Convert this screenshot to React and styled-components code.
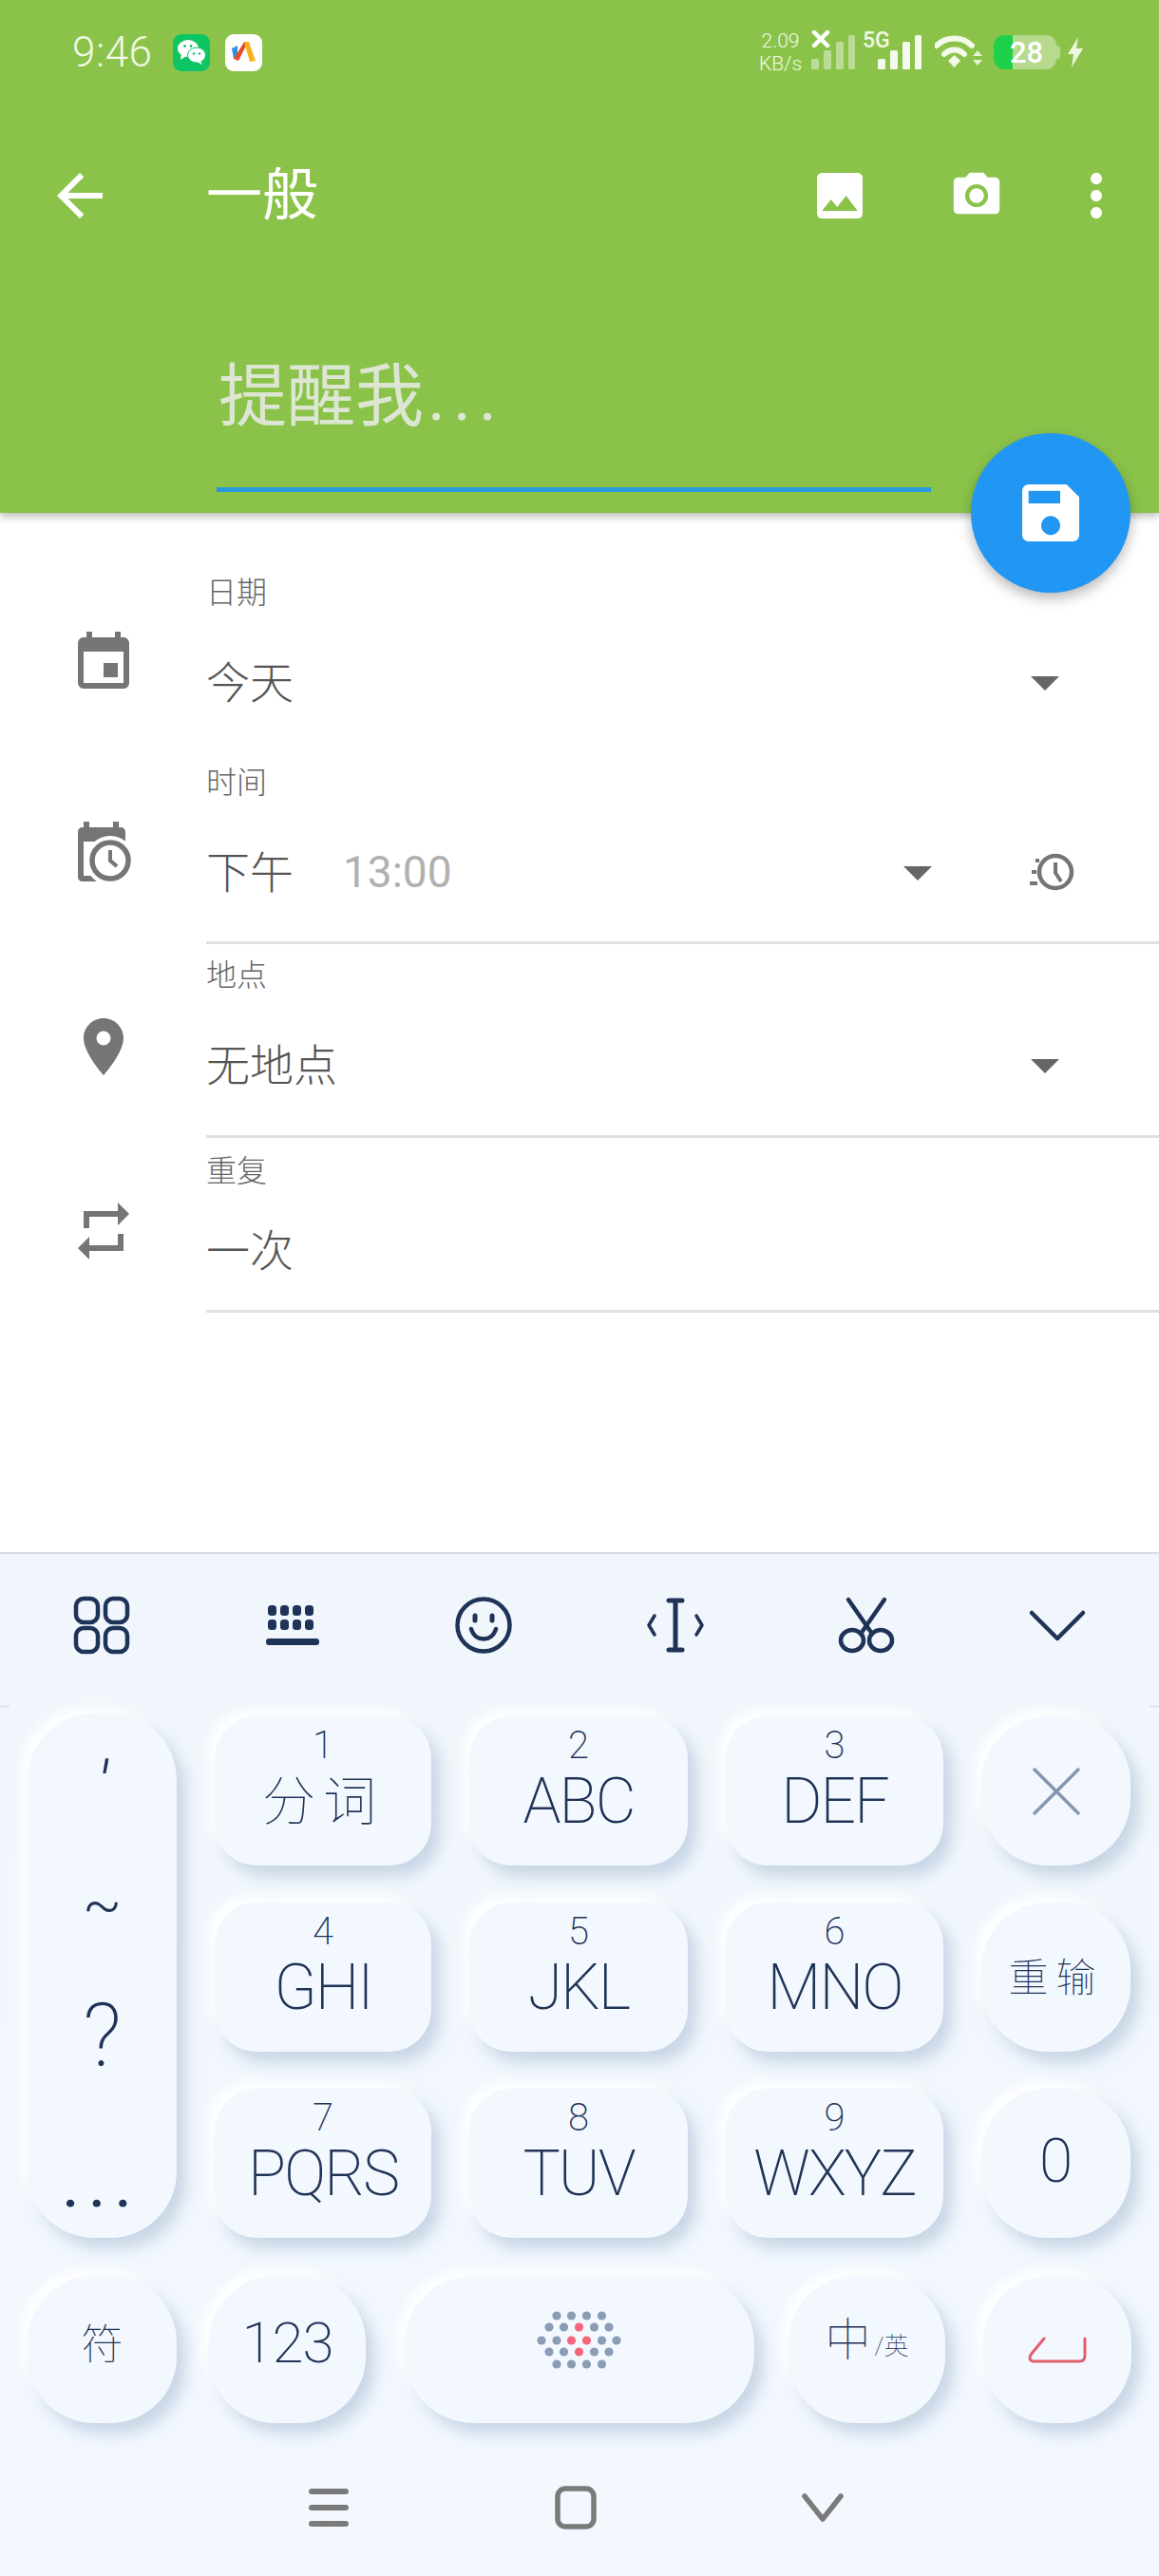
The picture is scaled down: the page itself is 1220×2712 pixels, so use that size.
import React from "react";
import styled, { createGlobalStyle } from "styled-components";
import {
  MdArrowBack,
  MdArrowDropDown,
  MdEvent,
  MdImage,
  MdMoreVert,
  MdPhotoCamera,
  MdPlace,
  MdRepeat,
  MdSave,
} from "react-icons/md";

const ink = "#1f3357";
const sans = `Roboto, "Noto Sans CJK SC", sans-serif`;

const Global = createGlobalStyle`
  html, body { margin: 0; padding: 0; background: #fff; }
  * { box-sizing: border-box; }
`;

const Screen = styled.div`
  width: 1220px;
  height: 2712px;
  display: flex;
  flex-direction: column;
  overflow: hidden;
  font-family: ${sans};
  background: #fff;
`;

/* header */
const Header = styled.header`
  position: relative;
  z-index: 2;
  height: 540px;
  flex: none;
  background: #8bc34a;
  box-shadow: 0 3px 9px rgba(0, 0, 0, 0.3);
`;
const StatusBar = styled.div`
  height: 110px;
  display: flex;
  align-items: center;
  padding-left: 76px;
  color: #f1f8e6;
`;
const Clock = styled.span`
  width: 87px;
  font-size: 44px;
  font-weight: 300;
  letter-spacing: 0.5px;
  white-space: nowrap;
`;
const AppIcon = styled.span`
  width: 39px;
  height: 39px;
  margin-left: ${(p) => p.$ml}px;
  border-radius: 9px;
  background: ${(p) => p.$bg};
  display: flex;
  align-items: center;
  justify-content: center;
`;
const StatusRight = styled.div`
  margin-left: auto;
  margin-right: 79px;
  display: flex;
  align-items: center;
  height: 40px;
`;
const NetSpeed = styled.div`
  width: 53px;
  font-size: 21px;
  line-height: 24px;
  font-weight: 300;
  text-align: center;
  white-space: nowrap;
`;
const SignalBox = styled.div`
  position: relative;
  margin-left: ${(p) => p.$ml}px;
  display: flex;
`;
const FiveG = styled.span`
  position: absolute;
  left: -16px;
  top: -6px;
  font-size: 23px;
  line-height: 23px;
  font-weight: 500;
`;
const Battery = styled.div`
  position: relative;
  width: 66px;
  height: 36px;
  margin-left: 12px;
  border-radius: 11px;
  background: linear-gradient(to right, #1fd14a 0 20px, rgba(255, 255, 255, 0.38) 20px);
  color: #fff;
  font-size: 31px;
  font-weight: 500;
  display: flex;
  align-items: center;
  justify-content: center;
  padding-left: 3px;
  &::after {
    content: "";
    position: absolute;
    right: -4px;
    top: 11px;
    width: 4px;
    height: 14px;
    border-radius: 0 3px 3px 0;
    background: rgba(255, 255, 255, 0.38);
  }
`;
const ToolBar = styled.div`
  height: 192px;
  display: flex;
  align-items: center;
  color: #fff;
`;
const BarButton = styled.div`
  width: ${(p) => p.$w}px;
  flex: none;
  display: flex;
  justify-content: center;
  font-size: ${(p) => p.$size || 64}px;
  margin-right: ${(p) => p.$mr || 0}px;
`;
const Title = styled.div`
  margin-left: 49px;
  flex: 1;
  font-size: 59px;
  line-height: 70px;
  font-weight: 400;
`;
const InputWrap = styled.div`
  width: 752px;
  margin-left: 228px;
  padding: 66px 0 45px 2px;
  border-bottom: 5px solid #2a98dc;
`;
const Placeholder = styled.div`
  font-size: 72px;
  line-height: 100px;
  font-weight: 400;
  color: #dde6d3;
  white-space: nowrap;
  span {
    letter-spacing: 8px;
    margin-left: 4px;
  }
`;
const Fab = styled.div`
  position: absolute;
  right: 30px;
  bottom: -84px;
  width: 168px;
  height: 168px;
  border-radius: 50%;
  background: #2196f3;
  color: #fff;
  font-size: 80px;
  display: flex;
  align-items: center;
  justify-content: center;
  box-shadow: 0 6px 14px rgba(0, 0, 0, 0.28);
`;

/* form */
const Form = styled.main`
  flex: 1;
  padding-top: 64px;
`;
const Field = styled.div`
  display: flex;
  padding-top: ${(p) => p.$top || 0}px;
`;
const IconSlot = styled.div`
  width: 217px;
  flex: none;
  display: flex;
  justify-content: center;
  align-items: flex-start;
  padding-top: ${(p) => p.$top}px;
  color: #757575;
  font-size: 72px;
`;
const FieldBody = styled.div`
  flex: 1;
`;
const FieldLabel = styled.div`
  height: 40px;
  font-size: 32px;
  line-height: 40px;
  font-weight: 300;
  color: #666;
`;
const ValueRow = styled.div`
  height: ${(p) => p.$h}px;
  padding-right: 84px;
  display: flex;
  align-items: center;
  font-size: 46px;
  font-weight: 300;
  color: #555;
  border-bottom: ${(p) => (p.$line ? "3px solid #e0e0e0" : "none")};
`;
const ValueText = styled.span`
  position: relative;
  top: -3px;
`;
const TimeText = styled.span`
  margin-left: 52px;
  flex: 1;
  color: #b0b0b0;
  font-size: 46px;
  font-weight: 400;
`;
const Grow = styled.span`
  flex: 1;
`;
const Arrow = styled.span`
  display: flex;
  font-size: 72px;
  color: #666;
  margin-right: ${(p) => p.$mr || 0}px;
`;

/* keyboard */
const Keyboard = styled.section`
  position: relative;
  height: 1078px;
  flex: none;
  background: linear-gradient(to bottom, #f0f6fb, #f3f8ff);
  border-top: 2px solid #d9dee3;
  color: ${ink};
`;
const KbTools = styled.div`
  height: 150px;
  padding: 0 6px;
  display: grid;
  grid-template-columns: repeat(6, 1fr);
  align-items: center;
  justify-items: center;
  &::before,
  &::after {
    content: "";
    position: absolute;
    top: 159px;
    width: 10px;
    height: 3px;
    background: #e4e9ef;
  }
  &::before { left: 0; }
  &::after { right: 0; }
`;
const KeyGrid = styled.div`
  margin-top: 21px;
  padding-left: 29px;
  display: grid;
  grid-template-columns: 157px 228px 230px 229px 157px;
  grid-template-rows: repeat(3, 157px);
  gap: 39px 40px;
`;
const Key = styled.div`
  background: #f3f8fe;
  border-radius: ${(p) => p.$radius || 44}px;
  box-shadow: 9px 11px 16px rgba(165, 185, 210, 0.55), -7px -7px 12px #fff;
  display: flex;
  flex-direction: column;
  align-items: center;
  justify-content: center;
  font-weight: 100;
  white-space: nowrap;
  margin-left: ${(p) => p.$ml || 0}px;
  width: ${(p) => (p.$w ? p.$w + "px" : "auto")};
`;
const SymbolKey = styled(Key)`
  grid-row: 1 / span 3;
  margin-top: -3px;
  justify-content: flex-start;
  padding-top: 12px;
`;
const SymbolGlyph = styled.div`
  height: 100px;
  margin-bottom: 39px;
  padding-top: ${(p) => p.$pt || 0}px;
  font-size: ${(p) => p.$size}px;
  line-height: 100px;
  font-weight: ${(p) => p.$weight || 300};
  font-style: ${(p) => (p.$italic ? "italic" : "normal")};
  letter-spacing: ${(p) => p.$sp || 0}px;
`;
const NumKey = styled(Key)`
  justify-content: flex-start;
  padding-top: 9px;
`;
const Digit = styled.div`
  font-size: 40px;
  line-height: 44px;
  font-weight: 200;
`;
const Letters = styled.div`
  margin-top: 7px;
  font-size: ${(p) => p.$size || 66}px;
  line-height: 60px;
  font-weight: ${(p) => p.$weight || 200};
  letter-spacing: ${(p) => (p.$sp !== undefined ? p.$sp : -2)}px;
`;
const SideText = styled.div`
  font-size: ${(p) => p.$size}px;
  font-weight: ${(p) => p.$weight || 100};
  letter-spacing: ${(p) => p.$sp || 0}px;
  margin-bottom: ${(p) => p.$mb || 0}px;
`;
const LangText = styled.div`
  display: flex;
  align-items: flex-end;
  font-size: 48px;
  line-height: 60px;
  font-weight: 100;
  margin-bottom: 20px;
  span {
    font-size: 26px;
    line-height: 48px;
    margin-left: 4px;
  }
`;
const BottomRow = styled.div`
  height: 155px;
  margin-top: 40px;
  padding-left: 29px;
  display: flex;
  > * { height: 155px; flex: none; }
`;
const NavBar = styled.nav`
  height: 164px;
  padding: 14px 8px 0 0;
  display: flex;
  justify-content: center;
  align-items: center;
  color: #777;
`;
const NavSlot = styled.div`
  width: 260px;
  display: flex;
  justify-content: center;
`;

const ToolSvg = ({ children }) => (
  <svg width="64" height="64" viewBox="0 0 64 64" fill="none" stroke={ink} strokeWidth="4.5" strokeLinecap="round" strokeLinejoin="round">
    {children}
  </svg>
);

const WeChat = () => (
  <svg width="31" height="28" viewBox="0 0 31 28">
    <ellipse cx="12" cy="10" rx="11" ry="9" fill="#fff" />
    <path d="M5 16l-1 6 6-4z" fill="#fff" />
    <ellipse cx="21" cy="17" rx="9.5" ry="8" fill="#fff" stroke="#0ec564" strokeWidth="1" />
    <path d="M25 23l2 4-6-3z" fill="#fff" />
    <circle cx="8.5" cy="7.5" r="1.4" fill="#0ec564" />
    <circle cx="15" cy="7.5" r="1.4" fill="#0ec564" />
    <circle cx="18" cy="15.5" r="1.2" fill="#0ec564" />
    <circle cx="24" cy="15.5" r="1.2" fill="#0ec564" />
  </svg>
);

const ViaLogo = () => (
  <svg width="28" height="26" viewBox="0 0 28 26">
    <path d="M1 9l6-3v12l-4 2z" fill="#2f8fe0" />
    <path d="M3 20L14 2h4L8 22z" fill="#ea4b26" />
    <path d="M14 2h5l7 20-6 1z" fill="#f8b31c" />
  </svg>
);

const Bars = ({ dim }) => (
  <svg width="46" height="36" viewBox="0 0 46 36" fill="#fff" opacity={dim ? 0.42 : 0.92}>
    <rect x="0" y="25" width="8" height="11" rx="1.5" />
    <rect x="13" y="16" width="8" height="20" rx="1.5" />
    <rect x="26" y="7" width="8" height="29" rx="1.5" />
    <rect x="39" y="0" width="7" height="36" rx="1.5" />
  </svg>
);

const Cross = () => (
  <svg width="20" height="18" viewBox="0 0 20 18" style={{ position: "absolute", left: 0, top: -5 }}>
    <path d="M3 2l14 14M17 2L3 16" stroke="#fff" strokeWidth="4.5" strokeLinecap="round" />
  </svg>
);

const Wifi = () => (
  <svg width="50" height="36" viewBox="0 0 50 36" fill="none" stroke="#f4faea">
    <path d="M2 11C12 1 29 1 39 11" strokeWidth="6" strokeLinecap="round" />
    <path d="M10 20c6-6 15-6 21 0" strokeWidth="6" strokeLinecap="round" />
    <path d="M14 27l6.500-6 6.500 6-6.500 7z" fill="#f4faea" stroke="none" />
    <path d="M40 22l5-6 5 6zM40 26l5 6 5-6z" fill="#f4faea" stroke="none" opacity="0.85" />
  </svg>
);

const Bolt = () => (
  <svg width="18" height="32" viewBox="0 0 18 32" style={{ marginLeft: 11 }}>
    <path d="M12 0L1 18h6L5 32l12-20h-7z" fill="#eef6e2" />
  </svg>
);

const EventClock = () => (
  <svg width="72" height="72" viewBox="0 0 72 72" fill="#757575">
    <path d="M15 3h6v6h25V3h6v6h2c3 0 5 2 5 5v47c0 3-2 5-5 5H14c-3 0-5-2-5-5V14c0-3 2-5 5-5h1zM15 24v36h37V24z" />
    <circle cx="43" cy="44" r="26" fill="#fff" />
    <circle cx="43" cy="44" r="19" fill="#fff" stroke="#757575" strokeWidth="5.5" />
    <path d="M43 33v11l7 6" fill="none" stroke="#757575" strokeWidth="4" />
  </svg>
);

const FastClock = () => (
  <svg width="60" height="60" viewBox="0 0 60 60" fill="none" stroke="#757575">
    <circle cx="35" cy="30" r="17" strokeWidth="4.5" />
    <path d="M35 20v11l6 9" strokeWidth="4" />
    <path d="M14 18h4M10 30h5M8 42h8" strokeWidth="4" />
  </svg>
);

const voiceRows = [
  { y: 12, x: [28, 43.500, 59.500, 75.500], red: [] },
  { y: 24, x: [20, 35.500, 51.500, 67.500, 83], red: [2] },
  { y: 38, x: [12, 28, 43.500, 59.500, 75.500, 91], red: [2, 3] },
  { y: 50, x: [20, 35.500, 51.500, 67.500, 83], red: [2] },
  { y: 63, x: [28, 43.500, 59.500, 75.500], red: [] },
];

const VoiceDots = () => (
  <svg width="104" height="76" viewBox="0 0 104 76" style={{ marginBottom: 20 }}>
    {voiceRows.map((row) =>
      row.x.map((x, i) => (
        <circle key={row.y + "-" + x} cx={x} cy={row.y} r="4.600" fill={row.red.includes(i) ? "#f4667a" : "#8a9db5"} />
      ))
    )}
  </svg>
);

const numKeys = [
  ["1", "分词", 56, 8, 100],
  ["2", "ABC"],
  ["3", "DEF"],
  ["4", "GHI"],
  ["5", "JKL"],
  ["6", "MNO"],
  ["7", "PQRS"],
  ["8", "TUV"],
  ["9", "WXYZ"],
];

export default function App() {
  return (
    <Screen>
      <Global />
      <Header>
        <StatusBar>
          <Clock>9:46</Clock>
          <AppIcon $ml={19} $bg="#0ec564"><WeChat /></AppIcon>
          <AppIcon $ml={16} $bg="#fff"><ViaLogo /></AppIcon>
          <StatusRight>
            <NetSpeed>2.09<br />KB/s</NetSpeed>
            <SignalBox $ml={6}><Bars dim /><Cross /></SignalBox>
            <SignalBox $ml={24}><FiveG>5G</FiveG><Bars /></SignalBox>
            <SignalBox $ml={14}><Wifi /></SignalBox>
            <Battery>28</Battery>
            <Bolt />
          </StatusRight>
        </StatusBar>
        <ToolBar>
          <BarButton $w={168} $size={72}><MdArrowBack /></BarButton>
          <Title>一般</Title>
          <BarButton $w={144}><MdImage /></BarButton>
          <BarButton $w={144} $size={58}><MdPhotoCamera /></BarButton>
          <BarButton $w={108} $size={72} $mr={12}><MdMoreVert /></BarButton>
        </ToolBar>
        <InputWrap>
          <Placeholder>提醒我<span>...</span></Placeholder>
        </InputWrap>
        <Fab><MdSave /></Fab>
      </Header>

      <Form>
        <Field>
          <IconSlot $top={58}><MdEvent /></IconSlot>
          <FieldBody>
            <FieldLabel>日期</FieldLabel>
            <ValueRow $h={148}>
              <ValueText>今天</ValueText>
              <Grow />
              <Arrow><MdArrowDropDown /></Arrow>
            </ValueRow>
          </FieldBody>
        </Field>
        <Field $top={12}>
          <IconSlot $top={58}><EventClock /></IconSlot>
          <FieldBody>
            <FieldLabel>时间</FieldLabel>
            <ValueRow $h={150} $line>
              <ValueText>下午</ValueText>
              <TimeText>13:00</TimeText>
              <Arrow $mr={74}><MdArrowDropDown /></Arrow>
              <FastClock />
            </ValueRow>
          </FieldBody>
        </Field>
        <Field $top={13}>
          <IconSlot $top={59}><MdPlace /></IconSlot>
          <FieldBody>
            <FieldLabel>地点</FieldLabel>
            <ValueRow $h={151} $line>
              <ValueText>无地点</ValueText>
              <Grow />
              <Arrow><MdArrowDropDown /></Arrow>
            </ValueRow>
          </FieldBody>
        </Field>
        <Field $top={15}>
          <IconSlot $top={47}><MdRepeat /></IconSlot>
          <FieldBody>
            <FieldLabel>重复</FieldLabel>
            <ValueRow $h={129} $line><ValueText>一次</ValueText></ValueRow>
          </FieldBody>
        </Field>
      </Form>

      <Keyboard>
        <KbTools>
          <ToolSvg>
            <rect x="5" y="4" width="23" height="25" rx="8" />
            <rect x="36" y="4" width="23" height="25" rx="8" />
            <rect x="5" y="35" width="23" height="25" rx="8" />
            <rect x="36" y="35" width="23" height="25" rx="8" />
          </ToolSvg>
          <ToolSvg>
            <g fill={ink} stroke="none">
              {[6, 19, 32, 45].map((x) => <rect key={x} x={x} y="11" width="9" height="11" rx="3.500" />)}
              {[6, 19, 32, 45].map((x) => <rect key={x} x={x} y="26" width="9" height="11" rx="3.500" />)}
              <rect x="4" y="46" width="56" height="7" rx="3" />
            </g>
          </ToolSvg>
          <ToolSvg>
            <circle cx="32" cy="32" r="27.500" />
            <path d="M19 36c4 14 22 14 26 0" />
            <path d="M23 22v5M41 22v5" strokeWidth="5" />
          </ToolSvg>
          <ToolSvg>
            <path d="M25 6h14M25 58h14M32 6v52" strokeWidth="5" />
            <path d="M10 22l-6 10 6 10M54 22l6 10-6 10" strokeWidth="3.500" />
          </ToolSvg>
          <ToolSvg>
            <path d="M13 5l25 36M51 5L26 41" />
            <ellipse cx="17" cy="48" rx="12" ry="11" />
            <ellipse cx="47" cy="48" rx="12" ry="11" />
          </ToolSvg>
          <ToolSvg>
            <path d="M5 19l27 27 27-27" />
          </ToolSvg>
        </KbTools>

        <KeyGrid>
          <SymbolKey $radius={70}>
            <SymbolGlyph $size={72} $pt={16} $italic>′</SymbolGlyph>
            <SymbolGlyph $size={60}>~</SymbolGlyph>
            <SymbolGlyph $size={92} $weight={200}>?</SymbolGlyph>
            <SymbolGlyph $size={60} $weight={500} $sp={11} $pt={20}>...</SymbolGlyph>
          </SymbolKey>
          {numKeys.slice(0, 3).map(([d, l, size, sp, weight]) => (
            <NumKey key={d}>
              <Digit>{d}</Digit>
              <Letters $size={size} $sp={sp} $weight={weight}>{l}</Letters>
            </NumKey>
          ))}
          <Key $radius={70}>
            <svg width="56" height="56" viewBox="0 0 56 56" fill="none" stroke="#8497ad" strokeWidth="3.500">
              <path d="M4 4l48 48M52 4L4 52" />
            </svg>
          </Key>
          {numKeys.slice(3, 6).map(([d, l]) => (
            <NumKey key={d}>
              <Digit>{d}</Digit>
              <Letters>{l}</Letters>
            </NumKey>
          ))}
          <Key $radius={70}>
            <SideText $size={42} $sp={8} $mb={6}>重输</SideText>
          </Key>
          {numKeys.slice(6).map(([d, l]) => (
            <NumKey key={d}>
              <Digit>{d}</Digit>
              <Letters>{l}</Letters>
            </NumKey>
          ))}
          <Key $radius={70}>
            <SideText $size={64} $mb={4} $weight={200}>0</SideText>
          </Key>
        </KeyGrid>

        <BottomRow>
          <Key $radius={70} $w={157}><SideText $size={44} $mb={18}>符</SideText></Key>
          <Key $radius={70} $w={165} $ml={34}><SideText $size={60} $sp={-1} $mb={14} $weight={200}>123</SideText></Key>
          <Key $radius={72} $w={368} $ml={41}><VoiceDots /></Key>
          <Key $radius={70} $w={165} $ml={36}><LangText>中<span>/英</span></LangText></Key>
          <Key $radius={70} $w={156} $ml={40}>
            <svg width="62" height="28" viewBox="0 0 62 28" fill="none" stroke="#e0606f" strokeWidth="3" strokeLinejoin="round" strokeLinecap="round">
              <path d="M17 2L3 19c-2 4-1 7 4 7h47c4 0 6-2 6-6V2" />
            </svg>
          </Key>
        </BottomRow>

        <NavBar>
          <NavSlot>
            <svg width="44" height="42" viewBox="0 0 44 42" fill="none" stroke="#7a7a7a" strokeWidth="6" strokeLinecap="round">
              <path d="M4 4h36M4 21h36M4 38h36" />
            </svg>
          </NavSlot>
          <NavSlot>
            <svg width="44" height="46" viewBox="0 0 44 46" fill="none" stroke="#7a7a7a" strokeWidth="5.500">
              <rect x="3" y="3" width="38" height="40" rx="8" />
            </svg>
          </NavSlot>
          <NavSlot>
            <svg width="44" height="30" viewBox="0 0 44 30" fill="none" stroke="#7a7a7a" strokeWidth="5.500" strokeLinecap="round" strokeLinejoin="round">
              <path d="M3 3l19 24L41 3" />
            </svg>
          </NavSlot>
        </NavBar>
      </Keyboard>
    </Screen>
  );
}
